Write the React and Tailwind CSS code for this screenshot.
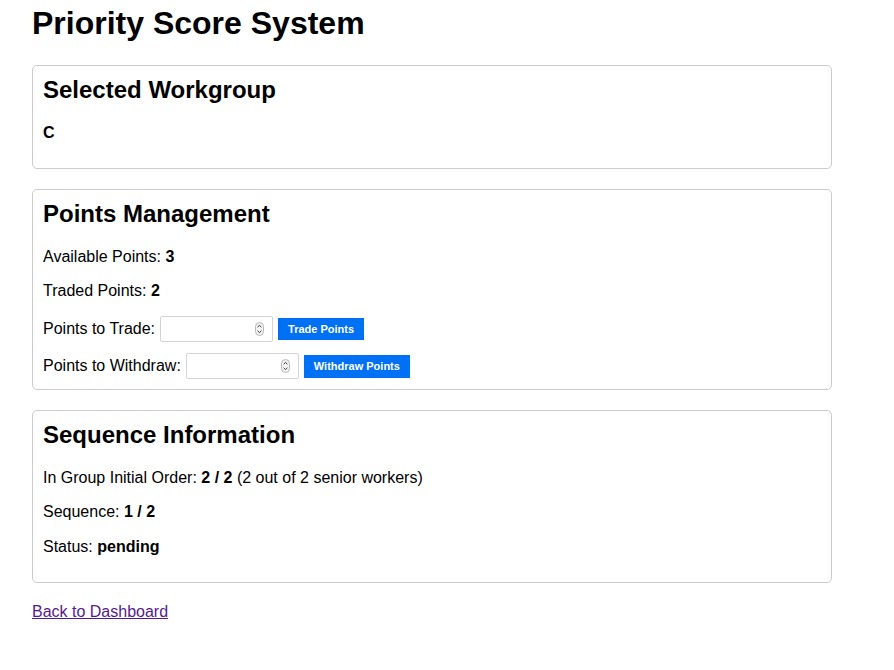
import React from 'react';

const Spinner = () => (
  <svg
    className="absolute right-[9px] top-1/2 -translate-y-1/2"
    width="9"
    height="14"
    viewBox="0 0 9 14"
  >
    <rect x="0.5" y="0.5" width="8" height="13" rx="4" fill="#f4f4f4" stroke="#b8b8b8" />
    <path d="M2.6 5.2 L4.5 3.4 L6.4 5.2" fill="none" stroke="#333" strokeWidth="1" />
    <path d="M2.6 8.8 L4.5 10.6 L6.4 8.8" fill="none" stroke="#333" strokeWidth="1" />
  </svg>
);

const PointsInput = ({ value, onChange }) => (
  <div className="relative w-[113px] h-[26px]">
    <input
      type="text"
      value={value}
      onChange={(e) => onChange(e.target.value)}
      className="w-full h-full border border-[#d4d4d4] rounded-[2px] px-[5px] text-[14px] outline-none bg-white"
    />
    <Spinner />
  </div>
);

const Card = ({ title, children }) => (
  <div className="border border-[#cccccc] rounded-[5px] p-[10px] mb-[20px]">
    <h2 className="text-[24px] leading-[27.6px] font-bold mb-[20px]">{title}</h2>
    {children}
  </div>
);

export default function App() {
  const [tradeValue, setTradeValue] = React.useState('');
  const [withdrawValue, setWithdrawValue] = React.useState('');

  return (
    <div
      className="min-h-[670px] bg-white text-black px-[32px] pt-[5px]"
      style={{ fontFamily: '"Liberation Sans", Arial, sans-serif' }}
    >
      <div className="w-[800px]">
        <h1 className="text-[32px] leading-[37px] font-bold mb-[23px]">Priority Score System</h1>

        <Card title="Selected Workgroup">
          <p className="text-[16px] leading-[18.4px] font-bold mb-[16px]">C</p>
        </Card>

        <Card title="Points Management">
          <p className="text-[16px] leading-[18.4px] mb-[16px]">
            Available Points: <strong>3</strong>
          </p>
          <p className="text-[16px] leading-[18.4px] mb-[16px]">
            Traded Points: <strong>2</strong>
          </p>
          <div className="flex items-center gap-[5px] mb-[11px]">
            <label className="text-[16px]">Points to Trade:</label>
            <PointsInput value={tradeValue} onChange={setTradeValue} />
            <button className="bg-[#0070f5] text-white text-[11px] font-bold h-[22px] px-[10px]">
              Trade Points
            </button>
          </div>
          <div className="flex items-center gap-[5px]">
            <label className="text-[16px]">Points to Withdraw:</label>
            <PointsInput value={withdrawValue} onChange={setWithdrawValue} />
            <button className="bg-[#0070f5] text-white text-[11px] font-bold h-[23px] px-[10px]">
              Withdraw Points
            </button>
          </div>
        </Card>

        <Card title="Sequence Information">
          <p className="text-[16px] leading-[18.4px] mb-[16px]">
            In Group Initial Order: <strong>2 / 2</strong> (2 out of 2 senior workers)
          </p>
          <p className="text-[16px] leading-[18.4px] mb-[16px]">
            Sequence: <strong>1 / 2</strong>
          </p>
          <p className="text-[16px] leading-[18.4px] mb-[16px]">
            Status: <strong>pending</strong>
          </p>
        </Card>

        <p className="text-[16px] leading-[18.4px]">
          <a href="#" className="text-[#551a8b] underline">
            Back to Dashboard
          </a>
        </p>
      </div>
    </div>
  );
}
